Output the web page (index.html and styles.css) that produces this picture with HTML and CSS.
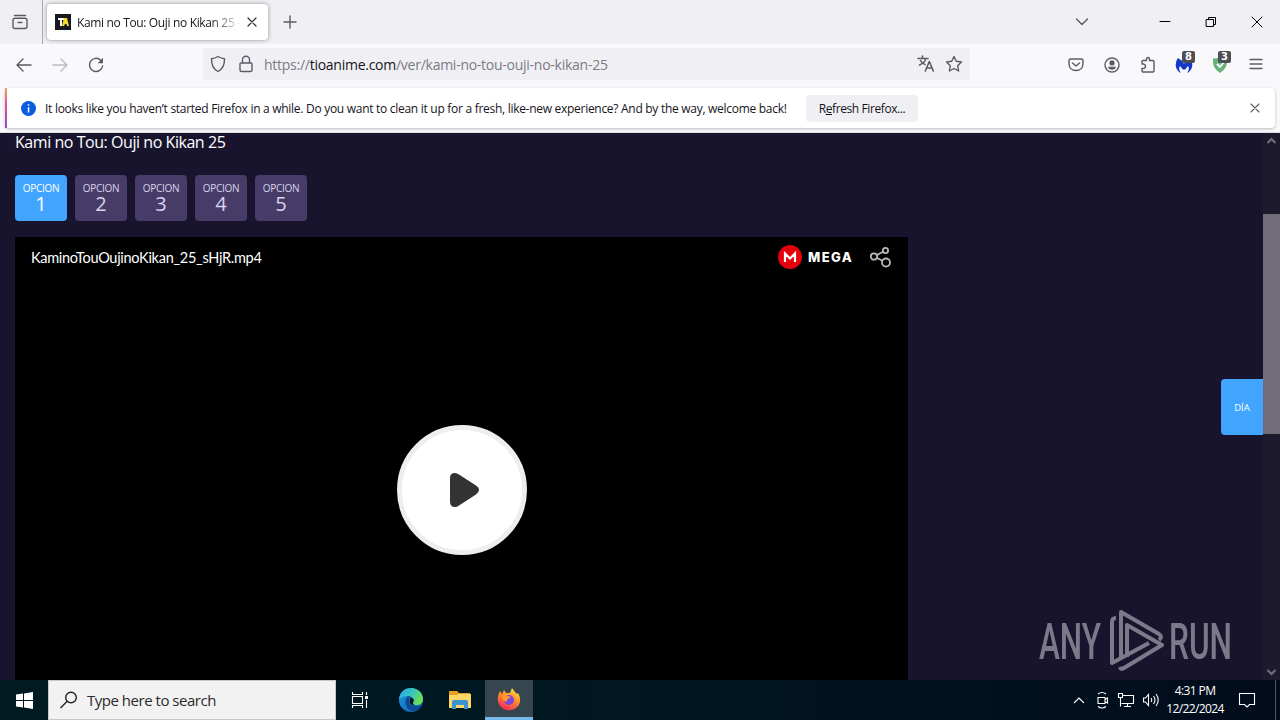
FILE: index.html
```
<!DOCTYPE html>
<html lang="en">
<head>
<meta charset="UTF-8">
<title>Kami no Tou: Ouji no Kikan 25</title>
<link rel="stylesheet" href="styles.css">
</head>
<body>

<header class="tabbar">
  <div class="recent">
    <svg class="ic" width="18" height="18" viewBox="0 0 18 18"><path d="M3.5 2.5h11M2 7.2q0-2 2-2h10q2 0 2 2v6.3q0 2-2 2H4q-2 0-2-2zM7 9.5h4"/></svg>
  </div>
  <div class="tab">
    <svg width="16" height="16" viewBox="0 0 16 16"><path fill="#181820" d="M0 0h16v16H0z"/><path fill="#fff" d="M3 4h6v2H7v6H5V6H3z"/><path fill="#f4dc32" d="M9 4h3l2 8h-2l-.5-2H10l-1 2H7z"/></svg>
    <div class="tab-title">Kami no Tou: Ouji no Kikan 25 -</div>
    <svg class="ic dark" width="10" height="10" viewBox="0 0 10 10"><path d="M1 1l8 8M9 1L1 9"/></svg>
  </div>
  <svg class="ic plus" width="14" height="14" viewBox="0 0 14 14"><path d="M7 1v12M1 7h12"/></svg>
  <div class="window-controls">
    <svg class="ic chevron" width="14" height="14" viewBox="0 0 14 14"><path d="M1.500 4L7 9.500l5.500-5.500"/></svg>
    <svg class="ic black" width="12" height="12" viewBox="0 0 12 12"><path d="M1 5.500h10"/></svg>
    <svg class="ic black" width="12" height="12" viewBox="0 0 12 12"><path d="M1.500 3.500h7v7h-7zM3.500 3.500v-2h7v7h-2"/></svg>
    <svg class="ic black" width="12" height="12" viewBox="0 0 12 12"><path d="M1 1l10 10M11 1L1 11"/></svg>
  </div>
</header>

<nav class="toolbar">
  <div class="cell"><svg class="ic" width="16" height="16" viewBox="0 0 16 16"><path d="M15 8H1.500M7 2L1 8l6 6"/></svg></div>
  <div class="cell off"><svg class="ic" width="16" height="16" viewBox="0 0 16 16"><path d="M1 8h13.500M9 2l6 6-6 6"/></svg></div>
  <div class="cell"><svg class="ic" width="16" height="16" viewBox="0 0 16 16"><path d="M12.700 3.200A6.600 6.600 0 1 0 14.600 9"/><path class="solid" d="M15 .8v5.400H9.600z"/></svg></div>
  <div class="urlbar">
    <svg class="ic" width="16" height="18" viewBox="0 0 16 18"><path d="M8 1.500q3 1.800 6.500 2.300Q14.800 13 8 16.500 1.200 13 1.500 3.800 5 3.300 8 1.500z"/></svg>
    <svg class="ic" width="16" height="18" viewBox="0 0 16 18"><path d="M3 8h10q1 0 1 1v6q0 1.500-1.500 1.500h-9Q2 16.500 2 15V9q0-1 1-1zM4.500 8V4.800a3.500 3.500 0 0 1 7 0V8"/></svg>
    <div class="url">https://<b>tioanime.com</b>/ver/kami-no-tou-ouji-no-kikan-25</div>
    <svg class="ic translate" width="18" height="18" viewBox="0 0 18 18"><path stroke-width="1.600" d="M1 3.500h10M5.500 1v2.500M2.500 10Q8 8 8.700 3.500M3.500 5.500Q5 8.500 8 9.500M8.300 16l4-9.500 4 9.500M9.700 13h5.500"/></svg>
    <svg class="ic" width="18" height="18" viewBox="0 0 18 18"><path d="M9 1.500l2.300 4.800 5.200.7-3.800 3.700.9 5.300L9 13.500 4.400 16l.9-5.300L1.500 7l5.200-.7z"/></svg>
  </div>
  <div class="extensions">
    <div class="cell"><svg class="ic" width="16" height="16" viewBox="0 0 16 16"><path d="M2.500 2h11Q15 2 15 3.500V7q-.5 6.500-7 6.500T1 7V3.500Q1 2 2.500 2zM4.500 6L8 9l3.500-3"/></svg></div>
    <div class="cell"><svg class="ic" width="16" height="16" viewBox="0 0 16 16"><circle cx="8" cy="8" r="7"/><path class="solid" d="M3.800 9.700h8.400q-1 3-4.200 3t-4.200-3zM8 3.300a2.600 2.600 0 1 1 0 5.200 2.600 2.600 0 0 1 0-5.200z"/></svg></div>
    <div class="cell"><svg class="ic" width="16" height="18" viewBox="0 0 16 18"><path d="M2 8V5.500q0-1 1-1h3.500V3q0-1.500 1.500-1.500T9.500 3v1.500H13q1 0 1 1V15q0 1-1 1H3q-1 0-1-1v-2.500h1.500Q5.500 12.300 5.500 10.300T3.500 8z"/></svg></div>
    <div class="cell">
      <svg width="18" height="18" viewBox="0 0 18 18"><path fill="#1438c8" d="M3 2q-3 4-2 9 1 4 5 6-3-4-1-7 2 3 4 4 2-1 4-4 2 3-1 7 4-2 5-6 1-5-2-9-4 2-6 6-2-4-6-6z"/></svg>
      <span class="badge">8</span>
    </div>
    <div class="cell">
      <svg width="16" height="18" viewBox="0 0 16 18"><path fill="#67b279" d="M8 1q3.500 1.500 7 1.500Q16 12.500 8 17 0 12.500 1 2.500 4.500 2.500 8 1z"/><path fill="none" stroke="#fff" stroke-width="1.800" d="M5 8l3 3 4-5"/></svg>
      <span class="badge">3</span>
    </div>
    <div class="cell"><svg class="ic" width="14" height="14" viewBox="0 0 14 14"><path d="M1 1.500h12M1 6h12M1 10.500h12"/></svg></div>
  </div>
</nav>

<div class="notice-wrap">
  <div class="notice">
    <svg width="15" height="15" viewBox="0 0 15 15"><circle cx="7.500" cy="7.500" r="7.500" fill="#0a5ce0"/><path fill="#fff" d="M6.800 3.300h1.500v1.500H6.800zM6.800 6.200h1.500v5.200H6.800z"/></svg>
    <span class="notice-text">It looks like you haven’t started Firefox in a while. Do you want to clean it up for a fresh, like-new experience? And by the way, welcome back!</span>
    <button class="refresh">R<u>e</u>fresh Firefox...</button>
    <svg class="ic notice-close" width="10" height="10" viewBox="0 0 10 10"><path d="M1 1l8 8M9 1L1 9"/></svg>
  </div>
</div>

<div class="viewport">
  <main class="page">
    <h1>Kami no Tou: Ouji no Kikan 25</h1>
    <div class="options">
      <div class="option active"><span>OPCION</span>1</div>
      <div class="option"><span>OPCION</span>2</div>
      <div class="option"><span>OPCION</span>3</div>
      <div class="option"><span>OPCION</span>4</div>
      <div class="option"><span>OPCION</span>5</div>
    </div>
    <div class="player">
      <div class="player-top">
        <span class="filename">KaminoTouOujinoKikan_25_sHjR.mp4</span>
        <svg width="24" height="24" viewBox="0 0 24 24"><circle cx="12" cy="12" r="12" fill="#e6000c"/><path fill="none" stroke="#fff" stroke-width="2.200" d="M7 17V8.500l5 5 5-5V17"/></svg>
        <span class="mega">MEGA</span>
        <svg class="share" width="24" height="24" viewBox="0 0 24 24"><circle cx="5" cy="11.500" r="3.200"/><circle cx="16.500" cy="5.500" r="2.600"/><circle cx="17" cy="17.500" r="4"/><path d="M8 10l6-3.200M8 13l5.500 2.700"/></svg>
      </div>
      <div class="play">
        <svg width="30" height="36" viewBox="0 0 30 36"><path fill="#333" d="M1 6Q1 1 6 1q2 0 4 1.500l17 11Q30 15.500 30 18t-3 4.500l-17 11Q8 35 6 35q-5 0-5-5z"/></svg>
      </div>
    </div>
  </main>
  <div class="day">DÍA</div>
  <div class="scrollbar">
    <svg width="11" height="8" viewBox="0 0 11 8"><path d="M1.500 6l4-4 4 4"/></svg>
    <div class="thumb"></div>
    <svg width="11" height="8" viewBox="0 0 11 8"><path d="M1.500 2l4 4 4-4"/></svg>
  </div>
  <svg class="watermark" width="196" height="64" viewBox="0 0 196 64">
    <text x="2" y="50" textLength="62" lengthAdjust="spacingAndGlyphs">ANY</text>
    <text x="132" y="50" textLength="63" lengthAdjust="spacingAndGlyphs">RUN</text>
    <path d="M79 9q-4 0-4 4v41l37-20M84 49V3l38 22q4 3 0 6M90 48V16l35 20-38 23q-3 2-4-1"/>
  </svg>
</div>

<footer class="taskbar">
  <div class="start"><svg width="17" height="17" viewBox="0 0 17 17"><path fill="#fff" d="M0 2.500l7-1V8H0zM8 1.400L17 0v8H8zM0 9h7v6.500l-7-1zM8 9h9v8l-9-1.400z"/></svg></div>
  <div class="search">
    <svg width="18" height="18" viewBox="0 0 18 18"><circle cx="11" cy="6.500" r="5.300"/><path d="M7.200 10.300L.5 17"/></svg>
    Type here to search
  </div>
  <div class="app task-view"><svg class="line" width="18" height="18" viewBox="0 0 18 18"><path d="M1.500 5.500h10v7h-10zM1.500 1v2.500h10V1M1.500 17v-2.500h10V17M15.500 1v3M15.500 9v8"/><path fill="#fff" stroke="none" d="M14 5h3v3h-3z"/></svg></div>
  <div class="app"><svg width="26" height="26" viewBox="0 0 26 26">
    <defs>
      <linearGradient id="edgeTop" x1="0" y1="0" x2="1" y2=".4"><stop offset="0" stop-color="#24a8e8"/><stop offset=".55" stop-color="#35c4c4"/><stop offset="1" stop-color="#68de58"/></linearGradient>
      <linearGradient id="edgeLow" x1="0" y1="0" x2="1" y2="1"><stop offset="0" stop-color="#1b9de2"/><stop offset="1" stop-color="#1357a8"/></linearGradient>
    </defs>
    <circle cx="13" cy="13" r="12" fill="url(#edgeLow)"/>
    <path fill="url(#edgeTop)" d="M1 12C2 4 8 1 13 1c7 0 12 5 12 11 0 4-3 6-6 6-4 0-5-1-4-3 1-3-1-6-5-6-4 0-7 2-9 3z"/>
    <path fill="#0e4a91" d="M9 10c-4 6 0 14 7 14 4-1 6-3 8-6-6 3-14 1-13-5 0-2 2-3 2-3-1-1-3-1-4 0z"/>
    <path fill="#001721" d="M12 12q1-2 3-.5 1.500 1.500 0 4.500 0 2 3 2.500-6 0-6.500-4z"/>
  </svg></div>
  <div class="app"><svg width="22" height="20" viewBox="0 0 22 20"><path fill="#e6a020" d="M0 1h8l2 2h11v5H0z"/><path fill="#fcd767" d="M0 5h8l2-1h12v14H0z"/><path fill="#3d93d2" d="M3 19v-7q0-2 2-2h12q2 0 2 2v7h-4v-4H7v4z"/></svg></div>
  <div class="app current"><svg width="24" height="24" viewBox="0 0 24 24">
    <defs><linearGradient id="fox" x1=".8" y1="0" x2=".3" y2="1"><stop offset="0" stop-color="#ffe34a"/><stop offset=".45" stop-color="#ff9028"/><stop offset="1" stop-color="#f5265c"/></linearGradient></defs>
    <path fill="url(#fox)" d="M3 4l2 3 2-4 2 3 4 0 2-5 3 4 2 2 1-1c3 5 3 11-1 14-5 5-13 4-17-1C0 15 0 9 3 4z"/>
    <circle cx="12" cy="13" r="5" fill="#7c46db"/>
    <path fill="#ff9a2c" d="M5 8q4-1 6 1l3 1-3 2q-2 1-1 3-4 0-5-7z"/>
  </svg></div>
  <div class="tray">
    <svg class="line up" width="12" height="8" viewBox="0 0 12 8"><path d="M1 7l5-5 5 5"/></svg>
    <svg class="line" width="14" height="18" viewBox="0 0 14 18"><path d="M2 6.500h7v6H2zM9 8.500l2.500-1.500v5L9 10.500M2 3q4-3 8 0M2 15.500q4 3 8 0"/></svg>
    <svg class="line" width="18" height="16" viewBox="0 0 18 16"><path d="M6 3.500h10.500v8H4.500M10.500 12v2.500M7 14.500h7M1.500 1.500h4v4h-4zM3.500 5.500v9"/></svg>
    <svg class="line" width="18" height="16" viewBox="0 0 18 16"><path d="M1.500 6h2l3-3.500v11l-3-3.500h-2zM9 6q1.500 2 0 4M11.500 4q3 4 0 8M14 2q4.500 6 0 12"/></svg>
    <div class="clock"><div>4:31 PM</div><div>12/22/2024</div></div>
    <svg class="line" width="18" height="18" viewBox="0 0 18 18"><path d="M1.500 2.500h15v11h-5L9 16l-2.500-2.500h-5z"/></svg>
  </div>
  <div class="show-desktop"></div>
</footer>

</body>
</html>
```
FILE: styles.css
```
* { margin: 0; padding: 0; box-sizing: border-box; }

body {
  width: 1280px;
  height: 720px;
  overflow: hidden;
  display: flex;
  flex-direction: column;
  font-family: "Open Sans", "Noto Sans", sans-serif;
  font-size: 12px;
  color: #15141a;
  background: #f9f9fb;
  white-space: nowrap;
}

svg { flex-shrink: 0; display: block; }

.ic {
  fill: none;
  stroke: #5b5b66;
  stroke-width: 1.4;
  stroke-linejoin: round;
  stroke-linecap: round;
}

.ic .solid { fill: #5b5b66; stroke: none; }
.ic.dark { stroke: #2b2a33; stroke-width: 1.2; }
.ic.black { stroke: #000; stroke-width: 1; }

/* tabs */
.tabbar {
  height: 44px;
  background: #f0f0f4;
  display: flex;
  align-items: center;
}

.recent {
  width: 43px;
  height: 44px;
  padding-left: 11px;
  display: flex;
  align-items: center;
  border-right: 1px solid #a9a9b2;
}

.tab {
  width: 221px;
  height: 36px;
  margin-left: 4px;
  padding: 0 11px 0 8px;
  background: #fff;
  border-radius: 4px;
  box-shadow: 0 0 4px rgba(0,0,0,0.4);
  display: flex;
  align-items: center;
  gap: 6px;
}

.tab-title {
  flex: 1;
  min-width: 0;
  letter-spacing: -0.35px;
  -webkit-mask-image: linear-gradient(to left, transparent, #000 30px);
  mask-image: linear-gradient(to left, transparent, #000 30px);
}

.plus { margin-left: 15px; }

.window-controls {
  margin-left: auto;
  margin-right: 17px;
  display: flex;
  align-items: center;
  gap: 34px;
}

.chevron { margin-right: 36px; }

/* navigation */
.toolbar {
  height: 44px;
  padding: 0 6px;
  display: flex;
  align-items: center;
}

.cell {
  width: 36px;
  height: 36px;
  position: relative;
  display: flex;
  align-items: center;
  justify-content: center;
}

.off { opacity: 0.4; }

.urlbar {
  width: 767px;
  height: 32px;
  margin-left: 89px;
  margin-top: -4px;
  padding: 0 7px;
  background: #f0f0f4;
  border-radius: 4px;
  display: flex;
  align-items: center;
  gap: 12px;
}

.url {
  flex: 1;
  margin-left: -2px;
  font-size: 14px;
  letter-spacing: -0.26px;
  color: #7b7b84;
}

.url b { font-weight: 400; color: #15141a; }
.translate { margin-right: -2px; }

.toolbar .cell { margin-top: -3px; }

.extensions { display: flex; margin-left: auto; }

.badge {
  position: absolute;
  top: 4px;
  left: 16px;
  width: 13px;
  height: 12px;
  border-radius: 2px;
  background: #4e4e55;
  color: #fff;
  font: bold 10px/12px "DejaVu Sans", sans-serif;
  text-align: center;
}

/* notification */
.notice-wrap {
  height: 45px;
  padding: 0 5px;
  border-bottom: 1px solid #dcdce2;
}

.notice {
  height: 40px;
  padding: 0 15px 0 14px;
  background: #fff;
  border: solid;
  border-image: linear-gradient(#f7a35a, #d84f9b 45%, #8b4ad8) 1;
  border-width: 0 0 0 2px;
  border-radius: 4px;
  box-shadow: 0 1px 3px rgba(0,0,0,0.25);
  display: flex;
  align-items: center;
}

.notice-text { width: 742px; margin-left: 9px; letter-spacing: -0.285px; }

.refresh {
  width: 112px;
  height: 27px;
  margin-left: 19px;
  border: 0;
  border-radius: 4px;
  background: #f0f0f4;
  color: #15141a;
  font: inherit;
  letter-spacing: -0.4px;
}

.notice-close { margin-left: auto; stroke-width: 1.1; }

/* site */
.viewport {
  flex: 1;
  min-height: 0;
  position: relative;
  display: flex;
  background: #19142d;
  overflow: hidden;
}

.page { flex: 1; padding-left: 15px; color: #fff; }

h1 {
  height: 42px;
  font-size: 16px;
  font-weight: 400;
  line-height: 18px;
  letter-spacing: -0.45px;
}

.options { display: flex; gap: 8px; }

.option {
  width: 52px;
  height: 46px;
  padding-top: 7px;
  border-radius: 4px;
  background: #463c67;
  color: #d9d3ee;
  font-size: 20px;
  line-height: 18px;
  text-align: center;
}

.option span {
  display: block;
  font-size: 10px;
  line-height: 13px;
  letter-spacing: -0.3px;
}

.option.active { background: #41a5ff; color: #fff; }

.player {
  width: 893px;
  height: 502px;
  margin-top: 16px;
  background: #000;
}

.player-top {
  height: 40px;
  padding: 0 15px 0 16px;
  display: flex;
  align-items: center;
}

.filename {
  flex: 1;
  font: 14.5px Lato, sans-serif;
  letter-spacing: -0.28px;
}

.mega {
  width: 46px;
  margin-left: 6px;
  margin-right: -1px;
  font: 800 13px Inter, sans-serif;
  letter-spacing: 1.4px;
}

.share { margin-left: 16px; fill: none; stroke: #b9b9b9; stroke-width: 1.8; }

.play {
  width: 130px;
  height: 130px;
  margin: 148px auto 0;
  border: 5px solid #eee;
  border-radius: 50%;
  background: #fff;
  display: flex;
  align-items: center;
  justify-content: center;
  padding-left: 5px;
}

.day {
  width: 42px;
  height: 56px;
  margin-top: 246px;
  border-radius: 4px 0 0 4px;
  background: #41a5ff;
  color: #fff;
  font-size: 9.5px;
  line-height: 57px;
  text-align: center;
}

.scrollbar {
  width: 17px;
  padding: 4px 0;
  background: #1d1a2e;
  display: flex;
  flex-direction: column;
  align-items: center;
}

.scrollbar path { fill: none; stroke: #73707c; stroke-width: 2; }
.thumb { width: 17px; height: 220px; margin: 69px 0 auto; background: #716e79; }

.watermark {
  position: absolute;
  left: 1037px;
  top: 476px;
  overflow: visible;
  opacity: 0.55;
}

.watermark text { font: 500 50px Roboto, sans-serif; fill: #d0cdd6; }

.watermark path {
  fill: none;
  stroke: #d0cdd6;
  stroke-width: 4;
  stroke-linejoin: round;
}

/* taskbar */
.taskbar {
  height: 40px;
  background: linear-gradient(90deg, #001a22, #001721 45%, #020c1c);
  display: flex;
}

.start, .app {
  width: 48px;
  height: 40px;
  display: flex;
  align-items: center;
  justify-content: center;
}

.search {
  width: 288px;
  padding-left: 11px;
  background: #f2f2f2;
  border: 1px solid #c8c8c8;
  color: #2b2b2b;
  font-size: 15px;
  letter-spacing: -0.48px;
  display: flex;
  align-items: center;
  gap: 9px;
}

.search svg { fill: none; stroke: #222; stroke-width: 1.4; }

.app { margin-right: 1px; }
.task-view { margin-right: 3px; }
.app.current { background: #35464f; border-bottom: 3px solid #76b9ed; }

.line { fill: none; stroke: #fff; stroke-width: 1.1; }

.tray {
  margin-left: auto;
  padding-right: 19px;
  display: flex;
  align-items: center;
  gap: 7px;
  color: #fff;
}

.up { margin-right: 4px; }

.clock {
  width: 60px;
  margin: 0 6px 0 -2px;
  line-height: 18px;
  letter-spacing: -0.6px;
  text-align: center;
}

.show-desktop { width: 5px; border-left: 1px solid #4c5664; }
```
